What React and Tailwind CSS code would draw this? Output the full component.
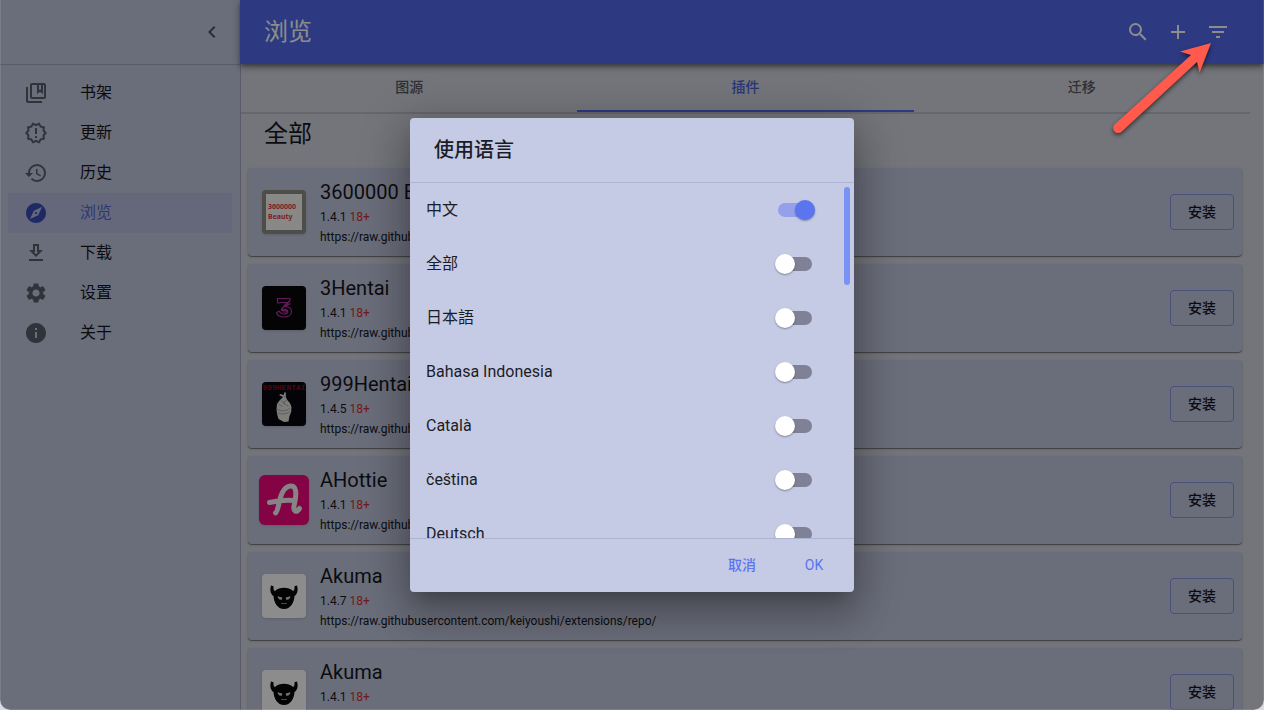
import React, { useState } from "react";
import {
  MdAdd,
  MdChevronLeft,
  MdExplore,
  MdFilterList,
  MdHistory,
  MdInfo,
  MdOutlineCollectionsBookmark,
  MdOutlineNewReleases,
  MdSearch,
  MdSettings,
} from "react-icons/md";

const REPO = "https://raw.githubusercontent.com/keiyoushi/extensions/repo/";

const navItems = [
  { label: "书架", icon: MdOutlineCollectionsBookmark },
  { label: "更新", icon: MdOutlineNewReleases },
  { label: "历史", icon: MdHistory },
  { label: "浏览", icon: MdExplore, active: true },
  { label: "下载", icon: DownloadIcon },
  { label: "设置", icon: MdSettings },
  { label: "关于", icon: MdInfo },
];

const tabs = ["图源", "插件", "迁移"];

const extensions = [
  { name: "3600000 Beauty", version: "1.4.1", logo: BeautyLogo },
  { name: "3Hentai", version: "1.4.1", logo: ThreeLogo },
  { name: "999Hentai", version: "1.4.5", logo: NineLogo },
  { name: "AHottie", version: "1.4.1", logo: AHottieLogo },
  { name: "Akuma", version: "1.4.7", logo: AkumaLogo },
  { name: "Akuma", version: "1.4.1", logo: AkumaLogo },
];

const languages = [
  "中文",
  "全部",
  "日本語",
  "Bahasa Indonesia",
  "Català",
  "čeština",
  "Deutsch",
];

function DownloadIcon({ className }) {
  return (
    <svg viewBox="0 0 24 24" fill="currentColor" className={className}>
      <path d="M19 9h-4V3H9v6H5l7 7 7-7zm-8 2V5h2v6h1.170L12 13.170 9.830 11H11zm-6 7h14v2H5z" />
    </svg>
  );
}

function BeautyLogo() {
  return (
    <div className="size-11 rounded-sm border-4 border-[#8c8c88] bg-[#f8f8f6] shadow-sm flex flex-col items-start justify-center pl-0.5 font-['Noto_Sans'] text-[7px] leading-[10px] font-bold text-[#e53945]">
      <span>3600000</span>
      <span>Beauty</span>
    </div>
  );
}

function ThreeLogo() {
  return (
    <svg viewBox="0 0 44 44" className="size-11 rounded-sm bg-[#08080a] shadow-sm">
      <g fill="none" stroke="#b52fa5" strokeWidth="1.2" strokeLinejoin="round">
        <path d="M15.500 17v-4.500h12.500v2l-5 6c4 .2 6.500 2 6.500 5 0 3.500-3.500 5.500-7.500 5.500-3.600 0-6.500-1.500-7.500-4l2.500-2c1.500 2.200 3.200 3 5 3 2.300 0 3.700-1 3.700-2.500 0-2-2-2.600-6.500-2.200l6-6.800h-6.500c-1 0-1.500.2-1.700.5z" />
        <path d="M19 24.500h5c1.500 0 1.500 1.500 0 1.500h-3.500M23 20.500l5.500-3" />
      </g>
    </svg>
  );
}

function NineLogo() {
  return (
    <div className="size-11 rounded-sm bg-[#07070f] shadow-sm overflow-hidden flex flex-col items-center">
      <span className="pt-0.5 font-['Liberation_Mono'] text-[8px] leading-[8px] font-bold text-[#930b18]">
        999HENTAI
      </span>
      <svg viewBox="0 0 18 31" className="w-[18px] h-[31px]">
        <path
          d="M8 5 4.300 3.200 5 1.900 8.800 3.100 9.400.3 10.800.5l.1 4.500 1.300 3c2 1.800 3.700 4 4.300 7l-.3 5-1.700 4-1 5.500-4.500.5-5.500-3L2 22 1.500 17l.5-5L4.500 8.500z"
          fill="#e3e3df"
        />
        <path
          d="M6 8.500l4 3M3.500 12l4 2.500M11 8l-2.500 3.500 5 2.500M2 17c3 2.500 9 2.500 13-1M2.500 21c4 1.500 9 1 12-1M8.500 4.500l2 .5"
          fill="none"
          stroke="#8a8a8c"
          strokeWidth=".6"
        />
      </svg>
    </div>
  );
}

function AHottieLogo() {
  return (
    <svg viewBox="0 0 50 50" className="size-[50px] rounded-md bg-[#f0067e] shadow-sm">
      <path
        d="M16.500 38c4-2 3-26 15-27 8-.5 5 14 3.500 20-.8 5 2 7.500 5.500 2.500M10.500 27.500c7-1.500 16-2.500 24-2"
        fill="none"
        stroke="#f5f0f2"
        strokeWidth="5"
        strokeLinecap="round"
        strokeLinejoin="round"
      />
    </svg>
  );
}

function AkumaLogo() {
  return (
    <svg viewBox="0 0 44 44" className="size-11 rounded-sm bg-white shadow-sm">
      <path
        d="M9 11.500c-1.200 4-.8 8.500 2.500 10.500.3 6.500 4 13 10.500 13s10.200-6.500 10.500-13c3.300-2 3.700-6.500 2.500-10.500l-2.500.8c.3 3.200-.3 4.200-1.500 4.700-2.200-2.200-5.500-3.300-9-3.300s-6.800 1.100-9 3.300c-1.200-.5-1.800-1.500-1.500-4.700z"
        fill="#060606"
      />
      <path
        d="M15.500 22.300l4.800 1.200-.3 1.900c-2 .7-4 0-4.500-3.100zM28.500 22.300l-4.800 1.200.3 1.900c2 .7 4 0 4.500-3.100z"
        fill="#d0d0d0"
      />
      <path d="M19.500 29.500h5" stroke="#8a8a8a" strokeWidth="1" strokeLinecap="round" />
    </svg>
  );
}

function Sidebar() {
  return (
    <aside className="w-60 shrink-0 bg-[#c2c7df]">
      <div className="h-[65px] border-b border-[#a3a7bd] flex items-center justify-end pr-4">
        <button aria-label="收起" className="size-6 text-[#50535f]">
          <MdChevronLeft className="size-6" />
        </button>
      </div>
      <nav className="p-2">
        {navItems.map(({ label, icon: Icon, active }) => (
          <a
            key={label}
            href="#"
            className={
              active
                ? "h-10 px-4 flex items-center gap-8 bg-[#b9bee1] text-[#5166d2]"
                : "h-10 px-4 flex items-center gap-8 text-[#15171c]"
            }
          >
            <Icon
              className={active ? "size-6 text-[#3a4eb8]" : "size-6 text-[#5a5d6a]"}
            />
            <span>{label}</span>
          </a>
        ))}
      </nav>
    </aside>
  );
}

function ExtensionCard({ item }) {
  const Logo = item.logo;
  return (
    <li className="h-[88px] shrink-0 p-2 flex items-center gap-2 rounded bg-[#c2c7df] shadow-[0_1px_1px_rgba(0,0,0,0.4),0_1px_3px_rgba(0,0,0,0.12)]">
      <div className="w-14 flex justify-center">
        <Logo />
      </div>
      <div className="flex-1 min-w-0 text-xs leading-5">
        <h3 className="text-xl leading-[30px]">{item.name}</h3>
        <p>
          {item.version} <span className="text-[#d32f2f]">18+</span>
        </p>
        <p>{REPO}</p>
      </div>
      <button className="w-16 h-9 rounded border border-[#8593dc] text-sm font-medium">
        安装
      </button>
    </li>
  );
}

function LanguageDialog() {
  const [enabled, setEnabled] = useState(["中文"]);

  const toggle = (lang) => {
    setEnabled((prev) =>
      prev.includes(lang) ? prev.filter((l) => l !== lang) : [...prev, lang]
    );
  };

  return (
    <div
      role="dialog"
      aria-labelledby="language-title"
      className="w-[444px] max-h-[calc(100vh-236px)] flex flex-col rounded bg-[#c5cae5] text-[#1b1d26] shadow-[0_11px_15px_-7px_rgba(0,0,0,0.2),0_24px_38px_3px_rgba(0,0,0,0.14),0_9px_46px_8px_rgba(0,0,0,0.2)]"
    >
      <h2 id="language-title" className="px-6 py-4 text-xl leading-8 font-medium">
        使用语言
      </h2>
      <div className="relative flex-1 min-h-0 overflow-hidden border-y border-[#aeb3d1]">
        <ul>
          {languages.map((lang) => (
            <li key={lang}>
              <label className="h-[54px] pl-4 pr-[42px] flex items-center justify-between">
                {lang}
                <input
                  type="checkbox"
                  checked={enabled.includes(lang)}
                  onChange={() => toggle(lang)}
                  className="relative w-[34px] h-3.5 appearance-none rounded-full bg-[#7f8296] checked:bg-[#94a1ea] before:content-[''] before:absolute before:-top-[3px] before:-left-[3px] before:size-5 before:rounded-full before:bg-white before:shadow-[0_1px_2px_rgba(0,0,0,0.35)] checked:before:translate-x-5 checked:before:bg-[#5b74ef]"
                />
              </label>
            </li>
          ))}
        </ul>
        {/* scroll thumb */}
        <div className="absolute top-1 right-1 w-1.5 h-[98px] rounded-full bg-[#7b91f4]" />
      </div>
      <div className="p-2 flex justify-end gap-2 text-sm font-medium text-[#5b74ef]">
        <button className="w-16 h-[37px]">取消</button>
        <button className="w-16 h-[37px] font-normal">OK</button>
      </div>
    </div>
  );
}

export default function App() {
  return (
    <div className="bg-[#dcdce0] font-['Roboto','Noto_Sans_CJK_SC',sans-serif] text-base text-[#15171c]">
      <div className="relative h-screen flex rounded-b-[10px] overflow-hidden bg-[#d2d5df]">
        <Sidebar />

        <div className="flex-1 min-w-0 flex flex-col">
          <header className="relative z-10 h-16 shrink-0 pl-6 pr-[26px] flex items-center bg-[#526bec] text-white shadow-[0_2px_4px_-1px_rgba(0,0,0,0.35),0_4px_5px_rgba(0,0,0,0.2),0_1px_10px_rgba(0,0,0,0.2)]">
            <h1 className="flex-1 text-2xl">浏览</h1>
            <button aria-label="搜索" className="size-10 flex items-center justify-center">
              <MdSearch className="size-6" />
            </button>
            <button aria-label="添加" className="size-10 flex items-center justify-center">
              <MdAdd className="size-6" />
            </button>
            <button aria-label="筛选" className="size-10 flex items-center justify-center">
              <MdFilterList className="size-6" />
            </button>
          </header>

          <main className="flex-1 min-h-0 overflow-hidden border-l border-[#a3a7bd] pr-3.5">
            <div role="tablist" className="flex border-b-2 border-[#b9bcc6]">
              {tabs.map((tab) => (
                <button
                  key={tab}
                  role="tab"
                  aria-selected={tab === "插件"}
                  className={
                    tab === "插件"
                      ? "flex-1 h-12 border-b-2 border-[#526bec] text-sm font-medium text-[#4c62d8]"
                      : "flex-1 h-12 border-b-2 border-transparent text-sm font-medium text-[#555862]"
                  }
                >
                  {tab}
                </button>
              ))}
            </div>
            <div className="pl-[7px] pr-2">
              <h2 className="pl-4 pt-0.5 pb-4 text-2xl leading-9">全部</h2>
              <ul className="flex flex-col gap-2">
                {extensions.map((item) => (
                  <ExtensionCard key={item.name + item.version} item={item} />
                ))}
              </ul>
            </div>
          </main>
        </div>

        {/* Backdrop */}
        <div className="absolute inset-0 z-20 flex items-center justify-center rounded-b-[10px] border-x border-b border-white/10 bg-black/45">
          <LanguageDialog />
        </div>

        {/* Arrow pointing at the filter button */}
        <svg
          viewBox="0 0 110 104"
          className="absolute top-9 right-[44px] z-30 w-[110px] h-[104px] pointer-events-none drop-shadow-[0_2px_2px_rgba(0,0,0,0.6)]"
        >
          <path
            d="M101 7 70 15.500l11 3.500L4.800 88.300a5 5 0 0 0 6.800 7.400L87 26l2.500 11z"
            fill="#ff5a4b"
          />
        </svg>
      </div>
    </div>
  );
}
